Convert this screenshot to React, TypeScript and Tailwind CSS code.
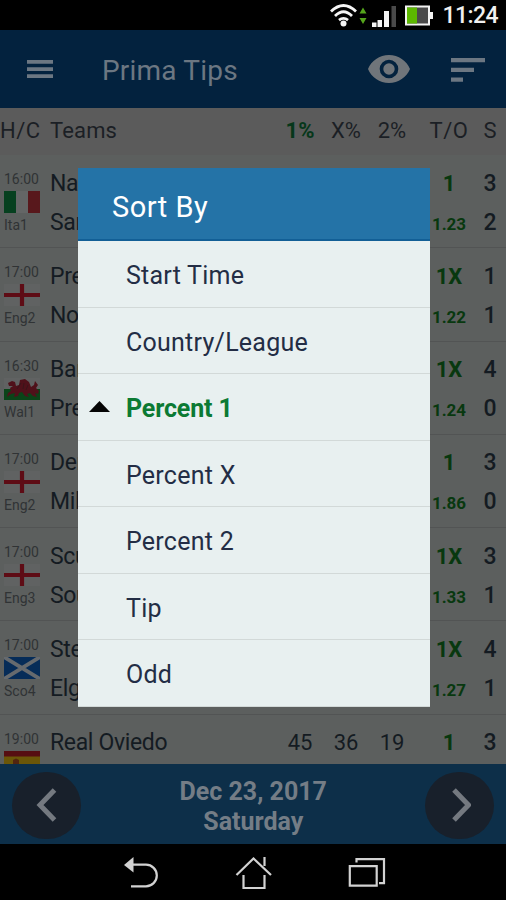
import { useState } from 'react'
import type { ReactNode } from 'react'

type Country = 'ita' | 'eng' | 'wal' | 'sco' | 'esp'

interface Match {
  time: string
  country: Country
  league?: string
  home: string
  away?: string
  percents?: [number, number, number]
  tip: string
  odd?: string
  score: string[]
}

const MATCHES: Match[] = [
  { time: '16:00', country: 'ita', league: 'Ita1', home: 'Napoli', away: 'Sampdoria', tip: '1', odd: '1.23', score: ['3', '2'] },
  { time: '17:00', country: 'eng', league: 'Eng2', home: 'Preston', away: 'Nottingham', tip: '1X', odd: '1.22', score: ['1', '1'] },
  { time: '16:30', country: 'wal', league: 'Wal1', home: 'Bangor City', away: 'Prestatyn', tip: '1X', odd: '1.24', score: ['4', '0'] },
  { time: '17:00', country: 'eng', league: 'Eng2', home: 'Derby', away: 'Millwall', tip: '1', odd: '1.86', score: ['3', '0'] },
  { time: '17:00', country: 'eng', league: 'Eng3', home: 'Scunthorpe', away: 'Southend', tip: '1X', odd: '1.33', score: ['3', '1'] },
  { time: '17:00', country: 'sco', league: 'Sco4', home: 'Stenhousemuir', away: 'Elgin City', tip: '1X', odd: '1.27', score: ['4', '1'] },
  { time: '19:00', country: 'esp', home: 'Real Oviedo', percents: [45, 36, 19], tip: '1', score: ['3'] },
]

const SORT_OPTIONS = ['Start Time', 'Country/League', 'Percent 1', 'Percent X', 'Percent 2', 'Tip', 'Odd']

const COLS = 'grid grid-cols-[50px_1fr_46px_46px_46px_68px_14px] pr-[9px]'

function Flag({ country }: { country: Country }) {
  return (
    <svg width="36" height="22" viewBox="0 0 36 22" className="block">
      {country === 'ita' && (
        <>
          <rect width="12" height="22" fill="#06401f" />
          <rect x="12" width="12" height="22" fill="#646666" />
          <rect x="24" width="12" height="22" fill="#58181c" />
        </>
      )}
      {country === 'eng' && (
        <>
          <rect width="36" height="22" fill="#606262" />
          <path d="M0 11h36M18 0v22" stroke="#5e0c15" strokeWidth="4.2" />
        </>
      )}
      {country === 'wal' && (
        <>
          <rect width="36" height="11" fill="#606262" />
          <rect y="11" width="36" height="11" fill="#0a4418" />
          <path
            d="M4 5l4-2 3 1 1 4 3-1 1-5 5-1 4 3 2 5 3-2 1-4 3 4-2 3 3 3-1 3-3-1 2 4-4-1-3-3-3 1 2 3-4-1-3-4-3 1-1 3-4 1 1-4-4 1-4 3 1-4 3-2-1-3 3-2-4 0z"
            fill="#4f111a"
          />
          <path d="M13 11l4-6M20 5l-1 6M24 7l-2 5" stroke="#351519" strokeWidth="0.8" />
        </>
      )}
      {country === 'sco' && (
        <>
          <rect width="36" height="22" fill="#062c58" />
          <path d="M0 0l36 22M36 0L0 22" stroke="#666a6e" strokeWidth="3.8" />
        </>
      )}
      {country === 'esp' && (
        <>
          <rect width="36" height="22" fill="#560e12" />
          <rect y="5.5" width="36" height="11" fill="#6b5608" />
          <path d="M9 9l3-1.500 3 1.500v5H9z" fill="#52250f" />
        </>
      )}
    </svg>
  )
}

function StatusBar() {
  return (
    <div className="flex h-[30px] justify-end bg-black">
      <svg width="206" height="30" viewBox="0 0 206 30">
        <g fill="none" stroke="#f4f4f4" strokeWidth="2.8">
          <path d="M31 11.500Q43.500-.5 56 11.500" />
          <path d="M35 16Q43.500 7.500 52 16" />
          <path d="M39 20.200Q43.500 16.500 48 20.200" />
        </g>
        <circle cx="43.500" cy="23.500" r="3" fill="#f4f4f4" />
        <path d="M59.500 13.500l3.500-6 3.500 6zM59.500 18l3.500 6 3.500-6z" fill="#55a51c" />
        <path d="M72 22.500h4.500V27H72zM77.500 20h4.500v7h-4.500zM84 11h5v16h-5z" fill="#f4f4f4" />
        <path d="M91.500 6h4.500v21h-4.500z" fill="#4a4a4a" />
        <rect x="106" y="6.500" width="23" height="18" fill="#4a4a4a" stroke="#f4f4f4" strokeWidth="2" />
        <rect x="107" y="7.500" width="10" height="16" fill="#5cb800" />
        <rect x="130" y="12" width="3" height="7" fill="#f4f4f4" />
        <text x="142.500" y="23" fill="#f0f0f0" fontFamily="Roboto, sans-serif" fontWeight="500" fontSize="23" textLength="56">
          11:24
        </text>
      </svg>
    </div>
  )
}

function AppBar() {
  return (
    <header className="flex h-[78px] items-center bg-[#03223e] text-[#6c7782]">
      <svg width="26" height="18" viewBox="0 0 26 18" className="ml-[27px]" fill="currentColor">
        <path d="M0 0h26v3.700H0zM0 7.200h26v3.700H0zM0 14.300h26V18H0z" />
      </svg>
      <h1 className="ml-[49px] flex-1 pt-[3px] text-[28px] leading-[36px] tracking-[0.2px]">Prima Tips</h1>
      <svg width="42" height="28" viewBox="0 0 42 28" className="mr-[41px] text-[#70757a]" fill="currentColor" fillRule="evenodd">
        <path d="M21 0C11.500 0 3.400 5.800 0 14c3.400 8.200 11.500 14 21 14s17.600-5.800 21-14C38.600 5.800 30.500 0 21 0zm0 23.300a9.300 9.300 0 1 1 0-18.600 9.300 9.300 0 0 1 0 18.600zm0-15a5.700 5.700 0 1 0 0 11.400 5.700 5.700 0 0 0 0-11.400z" />
      </svg>
      <svg width="34" height="24" viewBox="0 0 34 24" className="mr-[21px] mt-px" fill="currentColor">
        <path d="M0 0h34v4.300H0zM0 9.700h23V14H0zM0 19.500h12v4.300H0z" />
      </svg>
    </header>
  )
}

function TableHead() {
  return (
    <div className={`${COLS} h-[47px] bg-[#5b5b5b] pt-[9px] text-[22px] leading-[28px] text-[#1b1f25]`}>
      <div className="tracking-[0.5px]">H/C</div>
      <div className="tracking-[0.15px]">Teams</div>
      <div className="text-center font-bold text-[#06371a]">1%</div>
      <div className="text-center">X%</div>
      <div className="text-center">2%</div>
      <div className="text-center tracking-[0.5px]">T/O</div>
      <div className="text-center">S</div>
    </div>
  )
}

function MatchRow({ match }: { match: Match }) {
  return (
    <div className={`${COLS} h-[93.300px] shrink-0 border-b border-[#525454] text-[23px] leading-[28px] text-[#141b22]`}>
      <div className="pl-1 pt-4 text-[14px] leading-4 text-[#303335]">
        <div>{match.time}</div>
        <div className="mt-1">
          <Flag country={match.country} />
        </div>
        {match.league && <div className="mt-1">{match.league}</div>}
      </div>
      <div className="overflow-hidden whitespace-nowrap pt-[14.500px] tracking-[-0.35px]">
        <div>{match.home}</div>
        <div className="mt-[11px]">{match.away}</div>
      </div>
      {[0, 1, 2].map((i) => (
        <div key={i} className="pt-[14.500px] text-center text-[22px]">
          {match.percents?.[i]}
        </div>
      ))}
      <div className="pt-[14.500px] text-center text-[22px] font-bold text-[#08380f]">
        <div>{match.tip}</div>
        <div className="mt-[12px] text-[17px]">{match.odd}</div>
      </div>
      <div className="pt-[14.500px] text-center font-medium">
        <div>{match.score[0]}</div>
        <div className="mt-[11px]">{match.score[1]}</div>
      </div>
    </div>
  )
}

function RoundButton({ label, children }: { label: string; children: ReactNode }) {
  return (
    <button aria-label={label} className="flex h-[67px] w-[69px] items-center justify-center rounded-full bg-[#18202b]">
      <svg width="22" height="34" viewBox="0 0 22 34" fill="none" stroke="#747980" strokeWidth="5">
        {children}
      </svg>
    </button>
  )
}

function DateBar() {
  return (
    <div className="flex h-20 items-center justify-between bg-[#0d2f49] pl-3 pr-[11.500px] pt-0.5">
      <RoundButton label="Previous day">
        <path d="M18.500 2L4 17l14.500 15" />
      </RoundButton>
      <div className="pt-1 text-center text-[25px] font-bold leading-[30px] text-[#747d86]">
        <div>Dec 23, 2017</div>
        <div>Saturday</div>
      </div>
      <RoundButton label="Next day">
        <path d="M5 2l14.500 15L5 32" />
      </RoundButton>
    </div>
  )
}

function NavBar() {
  return (
    <nav className="h-14 bg-black">
      <svg width="506" height="56" viewBox="0 0 506 56" fill="none" stroke="#d2d2d2" strokeWidth="2.200">
        <path d="M133 20.700h13a10.800 10.800 0 0 1 0 21.600h-15" />
        <path d="M124 21l9.500-8v15.500z" fill="#d2d2d2" stroke="none" />
        <path d="M236.500 31L253.500 14.500 271 31M243.500 31v13h21V31M264.500 13v9" />
        <path d="M349.800 22.200h26.900v19.500h-26.900zM356.500 18.500v-3.300H384v24h-5" />
      </svg>
    </nav>
  )
}

interface SortDialogProps {
  selected: string
  onSelect: (option: string) => void
}

function SortDialog({ selected, onSelect }: SortDialogProps) {
  return (
    <div role="dialog" className="absolute left-[78px] top-[168px] w-[351.500px] bg-[#e8f0f0]">
      <h2 className="h-[73px] border-b-2 border-[#125f96] bg-[#2473a7] pl-[34px] pt-[21px] text-[29px] leading-9 tracking-[0.5px] text-white">
        Sort By
      </h2>
      {SORT_OPTIONS.map((option) => (
        <button
          key={option}
          onClick={() => onSelect(option)}
          className={
            option === selected
              ? 'flex h-[66.500px] w-full items-center border-b border-[#d2d9d8] text-[25px] font-bold tracking-[-0.15px] text-[#0b7a33]'
              : 'flex h-[66.500px] w-full items-center border-b border-[#d2d9d8] text-[25px] tracking-[0.25px] text-[#232d45]'
          }
        >
          <span className="flex w-12 pl-[11px]">
            {option === selected && (
              <svg width="21" height="11" viewBox="0 0 21 11">
                <path d="M0 11L10.500 0 21 11z" fill="#050505" />
              </svg>
            )}
          </span>
          <span className="pt-1">{option}</span>
        </button>
      ))}
    </div>
  )
}

export default function App() {
  const [sortBy, setSortBy] = useState('Percent 1')

  return (
    <div className="relative flex h-[900px] w-[506px] flex-col overflow-hidden bg-black font-['Roboto',sans-serif]">
      <StatusBar />
      <AppBar />
      <TableHead />
      <div className="flex h-[609px] flex-col overflow-hidden bg-[#5c5f5e]">
        {MATCHES.map((match, i) => (
          <MatchRow key={i} match={match} />
        ))}
      </div>
      <DateBar />
      <NavBar />
      <SortDialog selected={sortBy} onSelect={setSortBy} />
    </div>
  )
}
